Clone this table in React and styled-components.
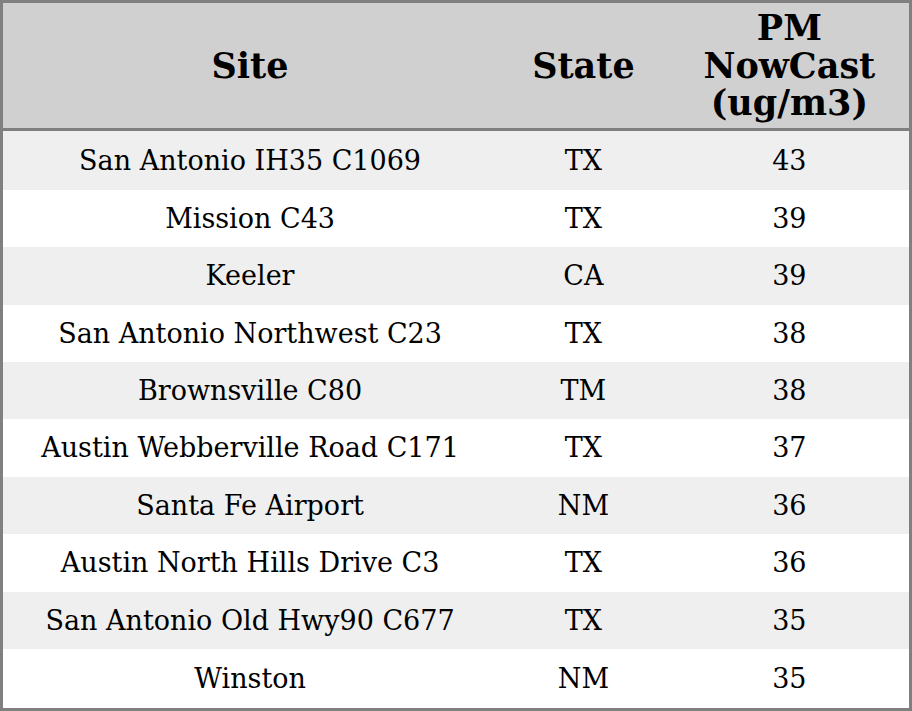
import React from "react";
import styled, { createGlobalStyle } from "styled-components";

const rows = [
  { site: "San Antonio IH35 C1069", state: "TX", pm: 43 },
  { site: "Mission C43", state: "TX", pm: 39 },
  { site: "Keeler", state: "CA", pm: 39 },
  { site: "San Antonio Northwest C23", state: "TX", pm: 38 },
  { site: "Brownsville C80", state: "TM", pm: 38 },
  { site: "Austin Webberville Road C171", state: "TX", pm: 37 },
  { site: "Santa Fe Airport", state: "NM", pm: 36 },
  { site: "Austin North Hills Drive C3", state: "TX", pm: 36 },
  { site: "San Antonio Old Hwy90 C677", state: "TX", pm: 35 },
  { site: "Winston", state: "NM", pm: 35 },
];

const GlobalStyle = createGlobalStyle`
  html, body {
    margin: 0;
    padding: 0;
    background: #fff;
  }
  body {
    font-family: "DejaVu Serif", "Liberation Serif", serif;
  }
`;

const Table = styled.table`
  width: 912px;
  height: 711px;
  border-collapse: collapse;
  border: 3px solid #808080;
  table-layout: fixed;
  color: #000;
`;

const HeadCell = styled.th`
  width: ${(p) => p.$w};
  height: 128px;
  padding: 0 6px;
  box-sizing: border-box;
  background: #d0d0d0;
  border-bottom: 3px solid #808080;
  font-size: 35px;
  font-weight: bold;
  line-height: 37.5px;
  text-align: center;
  vertical-align: middle;
`;

const Row = styled.tr`
  background: ${(p) => (p.$odd ? "#efefef" : "#ffffff")};
`;

const Cell = styled.td`
  padding: 0;
  font-size: 27px;
  line-height: 1.164;
  text-align: center;
  vertical-align: middle;
  white-space: nowrap;
`;

export default function App() {
  return (
    <>
      <GlobalStyle />
      <Table>
        <thead>
          <tr>
            <HeadCell $w="494px">Site</HeadCell>
            <HeadCell $w="172px">State</HeadCell>
            <HeadCell $w="240px">PM NowCast (ug/m3)</HeadCell>
          </tr>
        </thead>
        <tbody>
          {rows.map((r, i) => (
            <Row key={i} $odd={i % 2 === 0}>
              <Cell>{r.site}</Cell>
              <Cell>{r.state}</Cell>
              <Cell>{r.pm}</Cell>
            </Row>
          ))}
        </tbody>
      </Table>
    </>
  );
}
